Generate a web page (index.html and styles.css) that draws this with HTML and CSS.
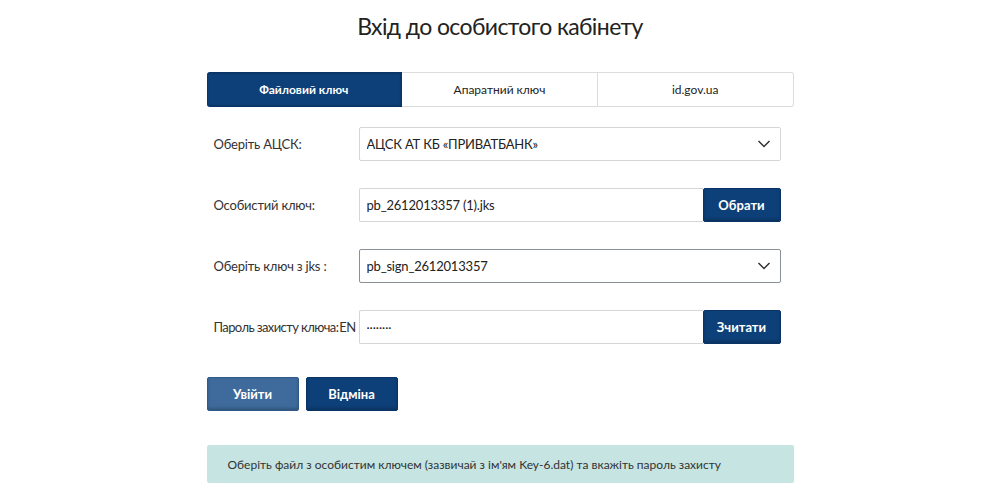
FILE: index.html
```html
<!DOCTYPE html>
<html lang="uk">
<head>
  <meta charset="UTF-8">
  <meta name="viewport" content="width=device-width, initial-scale=1.0">
  <title>Вхід до особистого кабінету</title>
  <link rel="stylesheet" href="styles.css">
</head>
<body>
  <h1>Вхід до особистого кабінету</h1>

  <div class="login-container">
    <div class="tabs">
      <div class="tab active">Файловий ключ</div>
      <div class="tab">Апаратний ключ</div>
      <div class="tab">id.gov.ua</div>
    </div>

    <form class="key-form" onsubmit="event.preventDefault();">
      <div class="form-row">
        <label for="ca">Оберіть АЦСК:</label>
        <div class="select-box">
          <select id="ca">
            <option>АЦСК АТ КБ «ПРИВАТБАНК»</option>
          </select>
          <svg class="chevron" width="14" height="8" viewBox="0 0 14 8"><path d="M1.5 1l5.5 5.5 5.5-5.5" fill="none" stroke="#333" stroke-width="1.5"/></svg>
        </div>
      </div>

      <div class="form-row">
        <label for="keyfile">Особистий ключ:</label>
        <div class="input-group">
          <input type="text" id="keyfile" value="pb_2612013357 (1).jks" readonly>
          <button type="button" class="btn">Обрати</button>
        </div>
      </div>

      <div class="form-row">
        <label for="jkskey">Оберіть ключ з jks :</label>
        <div class="select-box focused">
          <select id="jkskey">
            <option>pb_sign_2612013357</option>
          </select>
          <svg class="chevron" width="14" height="8" viewBox="0 0 14 8"><path d="M1.5 1l5.5 5.5 5.5-5.5" fill="none" stroke="#333" stroke-width="1.5"/></svg>
        </div>
      </div>

      <div class="form-row">
        <label for="password" class="tight">Пароль захисту ключа:<span class="lang">EN</span></label>
        <div class="input-group">
          <input type="text" id="password" class="password" value="········">
          <button type="button" class="btn">Зчитати</button>
        </div>
      </div>

      <div class="actions">
        <button type="submit" class="btn btn-light">Увійти</button>
        <button type="button" class="btn">Відміна</button>
      </div>
    </form>

    <div class="info-message">
      Оберіть файл з особистим ключем (зазвичай з ім'ям Key-6.dat) та вкажіть пароль захисту
    </div>
  </div>
</body>
</html>
```

FILE: styles.css
```css
/* Basic Reset */
* {
  margin: 0;
  padding: 0;
  box-sizing: border-box;
}

body {
  font-family: 'Lato', 'Noto Sans', sans-serif;
  background-color: #ffffff;
  color: #333;
  font-size: 13px;
}

h1 {
  text-align: center;
  font-size: 23px;
  font-weight: normal;
  letter-spacing: -0.6px;
  color: #222;
  margin-top: 10px;
  line-height: 32px;
  margin-bottom: 30px;
}

.login-container {
  width: 587px;
  margin: 0 auto;
}

.tabs {
  display: flex;
  height: 35px;
  margin-bottom: 20px;
}

.tab {
  flex: 1;
  display: flex;
  align-items: center;
  justify-content: center;
  border: 1px solid #dcdcdc;
  border-left: none;
  font-size: 12px;
  color: #222;
  background-color: #fff;
}

.tab:last-child {
  border-radius: 0 3px 3px 0;
}

.tab.active {
  background-color: #0d3f78;
  border-color: #0a3468;
  color: #fff;
  font-weight: bold;
  border-radius: 3px 0 0 3px;
  box-shadow: inset 0 0 2px rgba(0, 0, 0, 0.4);
}

.form-row {
  display: flex;
  align-items: center;
  height: 34px;
  margin-bottom: 27px;
  width: 574px;
}

.form-row label {
  width: 152px;
  padding-left: 7px;
  color: #333;
  white-space: nowrap;
  letter-spacing: -0.2px;
}

.form-row label.tight {
  letter-spacing: -0.6px;
}

.lang {
  margin-left: 1px;
}

.select-box {
  position: relative;
  flex: 1;
  height: 34px;
}

.select-box select {
  appearance: none;
  -webkit-appearance: none;
  width: 100%;
  height: 100%;
  border: 1px solid #d6d6d6;
  border-radius: 2px;
  background: #fff;
  font-family: inherit;
  font-size: 13px;
  letter-spacing: -0.2px;
  color: #222;
  padding: 0 7px;
}

.select-box.focused select {
  border-color: #8a9098;
}

.chevron {
  position: absolute;
  right: 10px;
  top: 13px;
  pointer-events: none;
}

.input-group {
  flex: 1;
  display: flex;
  height: 34px;
}

.input-group input {
  flex: 1;
  min-width: 0;
  border: 1px solid #d6d6d6;
  border-right: none;
  border-radius: 2px 0 0 2px;
  font-family: inherit;
  font-size: 13px;
  letter-spacing: -0.2px;
  color: #222;
  padding: 0 7px;
}

.input-group input.password {
  font-size: 12px;
  letter-spacing: 0;
}

.btn {
  width: 78px;
  height: 34px;
  background-color: #0d3f78;
  color: #fff;
  border: 1px solid #0a3366;
  border-radius: 2px;
  font-family: inherit;
  font-size: 13px;
  font-weight: bold;
  cursor: pointer;
  box-shadow: inset 0 -2px 3px rgba(0, 0, 0, 0.2);
}

.actions {
  display: flex;
  gap: 7px;
  margin-top: 33px;
}

.actions .btn {
  width: 92px;
}

.btn-light {
  background-color: #3e6b9b;
  border-color: #2f5a89;
}

.info-message {
  margin-top: 34px;
  background-color: #c5e4e2;
  border-radius: 2px;
  height: 38px;
  display: flex;
  align-items: center;
  padding-left: 21px;
  font-size: 12px;
  color: #333;
}
```
